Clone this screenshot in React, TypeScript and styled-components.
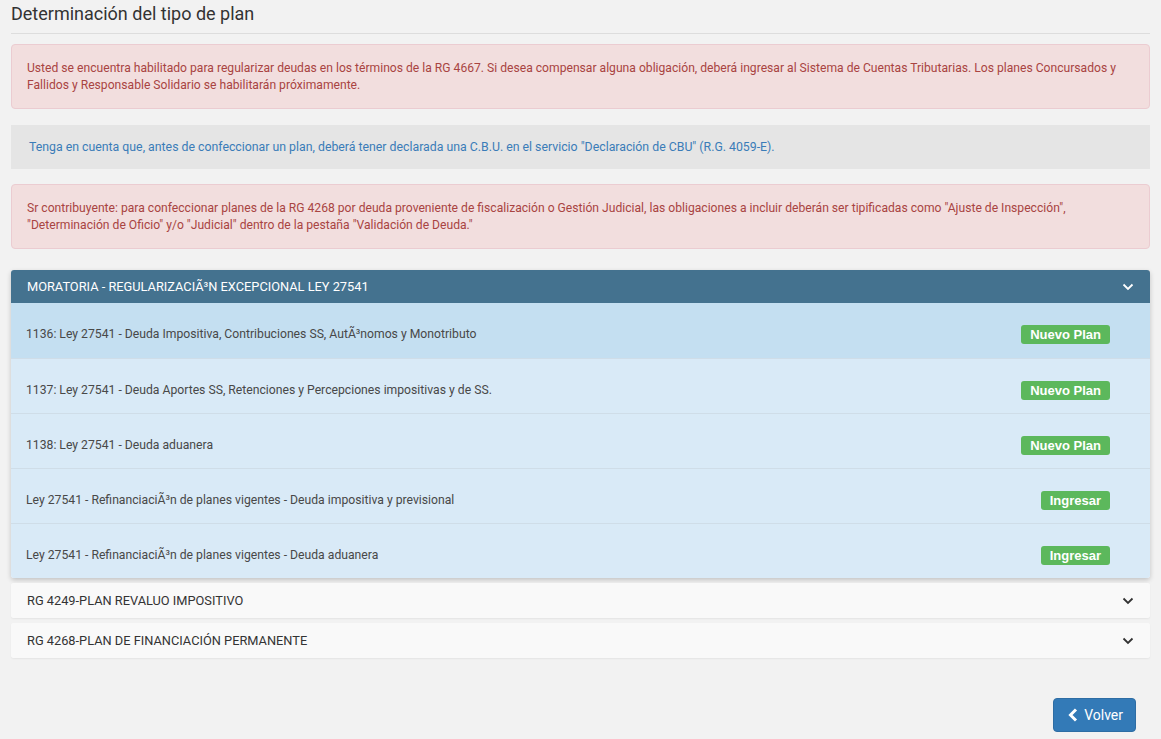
import React from "react";
import styled, { createGlobalStyle } from "styled-components";

const Global = createGlobalStyle`
  html, body { margin: 0; padding: 0; background: #f2f2f2; }
  body { font-family: Roboto, "Liberation Sans", Arial, sans-serif; font-size: 12px; color: #333; }
  * { box-sizing: border-box; }
`;

const Page = styled.div`
  padding: 0 11px 7px 11px;
  display: flex;
  flex-direction: column;
`;

const Title = styled.h1`
  margin: 0;
  padding: 3px 0 8px 0;
  font-size: 18px;
  font-weight: 400;
  color: #333;
  line-height: 22px;
  border-bottom: 1px solid #ddd;
`;

const Alert = styled.div<{ $kind: "danger" | "info"; $gap: number }>`
  margin-top: ${(p) => p.$gap}px;
  border-radius: 4px;
  line-height: 17px;
  ${(p) =>
    p.$kind === "danger"
      ? `background:#f2dede;border:1px solid #ebccd1;color:#a94442;padding:15px 15px 14px 15px;font-size:12.13px;`
      : `background:#e5e5e5;border:1px solid #e5e5e5;color:#3a7cb8;padding:13px 17px 12px 17px;border-radius:0;font-size:12.3px;`}
`;

const Accordion = styled.div`
  margin-top: 16px;
  display: flex;
  flex-direction: column;
`;

const Panel = styled.div<{ $open?: boolean }>`
  border-radius: 3px;
  overflow: hidden;
  background: #f9f9f9;
  box-shadow: ${(p) => (p.$open ? "0 2px 5px rgba(0,0,0,0.2)" : "0 1px 2px rgba(0,0,0,0.06)")};
  margin-top: 5px;
`;

const PanelHead = styled.div<{ $open?: boolean }>`
  display: flex;
  align-items: center;
  justify-content: space-between;
  height: ${(p) => (p.$open ? "33px" : "35px")};
  padding: 0 16px 0 16px;
  background: ${(p) => (p.$open ? "#44728f" : "#f9f9f9")};
  color: ${(p) => (p.$open ? "#fff" : "#333")};
  font-size: 12.8px;
`;

const Row = styled.div<{ $active?: boolean }>`
  display: flex;
  align-items: center;
  justify-content: space-between;
  height: 55px;
  padding: 7px 40px 0 15px;
  background: ${(p) => (p.$active ? "#c4dff1" : "#d9eaf7")};
  border-top: ${(p) => (p.$active ? "none" : "1px solid #cfdde8")};
  color: #484848;
  font-size: 12.2px;
`;

const Label = styled.span`
  display: inline-block;
  background: #5cb85c;
  color: #fff;
  font-family: "Liberation Sans", Arial, sans-serif;
  font-weight: 700;
  font-size: 13px;
  line-height: 15px;
  padding: 2px 9px 2px 9px;
  border-radius: 3px;
  margin-top: 1px;
`;

const Footer = styled.div`
  display: flex;
  justify-content: flex-end;
  padding: 40px 14px 0 0;
`;

const Button = styled.button`
  display: flex;
  align-items: center;
  gap: 6px;
  height: 34px;
  padding: 0 12px 0 14px;
  background: #337ab7;
  border: 1px solid #2e6da4;
  border-radius: 4px;
  color: #fff;
  font-family: Roboto, "Liberation Sans", Arial, sans-serif;
  font-size: 14px;
  cursor: pointer;
`;

const Chevron = ({ color }: { color: string }) => (
  <svg width="12" height="8" viewBox="0 0 12 8">
    <path d="M1.5 1.5 L6 6 L10.5 1.5" fill="none" stroke={color} strokeWidth="1.8" />
  </svg>
);

const rows = [
  { text: "1136: Ley 27541 - Deuda Impositiva, Contribuciones SS, AutÃ³nomos y Monotributo", label: "Nuevo Plan", active: true },
  { text: "1137: Ley 27541 - Deuda Aportes SS, Retenciones y Percepciones impositivas y de SS.", label: "Nuevo Plan" },
  { text: "1138: Ley 27541 - Deuda aduanera", label: "Nuevo Plan" },
  { text: "Ley 27541 - RefinanciaciÃ³n de planes vigentes - Deuda impositiva y previsional", label: "Ingresar" },
  { text: "Ley 27541 - RefinanciaciÃ³n de planes vigentes - Deuda aduanera", label: "Ingresar" },
];

export default function App() {
  return (
    <>
      <Global />
      <Page>
        <Title>Determinación del tipo de plan</Title>
        <Alert $kind="danger" $gap={10}>
          Usted se encuentra habilitado para regularizar deudas en los términos de la RG 4667. Si desea compensar alguna
          obligación, deberá ingresar al Sistema de Cuentas Tributarias. Los planes Concursados y Fallidos y Responsable
          Solidario se habilitarán próximamente.
        </Alert>
        <Alert $kind="info" $gap={16}>
          Tenga en cuenta que, antes de confeccionar un plan, deberá tener declarada una C.B.U. en el servicio
          "Declaración de CBU" (R.G. 4059-E).
        </Alert>
        <Alert $kind="danger" $gap={15}>
          Sr contribuyente: para confeccionar planes de la RG 4268 por deuda proveniente de fiscalización o Gestión
          Judicial, las obligaciones a incluir deberán ser tipificadas como "Ajuste de Inspección", "Determinación de
          Oficio" y/o "Judicial" dentro de la pestaña "Validación de Deuda."
        </Alert>
        <Accordion>
          <Panel $open>
            <PanelHead $open>
              <span>MORATORIA - REGULARIZACIÃ³N EXCEPCIONAL LEY 27541</span>
              <Chevron color="#fff" />
            </PanelHead>
            {rows.map((r) => (
              <Row key={r.text} $active={r.active}>
                <span>{r.text}</span>
                <Label>{r.label}</Label>
              </Row>
            ))}
          </Panel>
          <Panel>
            <PanelHead>
              <span>RG 4249-PLAN REVALUO IMPOSITIVO</span>
              <Chevron color="#333" />
            </PanelHead>
          </Panel>
          <Panel>
            <PanelHead>
              <span>RG 4268-PLAN DE FINANCIACIÓN PERMANENTE</span>
              <Chevron color="#333" />
            </PanelHead>
          </Panel>
        </Accordion>
        <Footer>
          <Button>
            <svg width="10" height="14" viewBox="0 0 10 14">
              <path d="M8 1.5 L2.5 7 L8 12.5" fill="none" stroke="#fff" strokeWidth="3" />
            </svg>
            Volver
          </Button>
        </Footer>
      </Page>
    </>
  );
}
